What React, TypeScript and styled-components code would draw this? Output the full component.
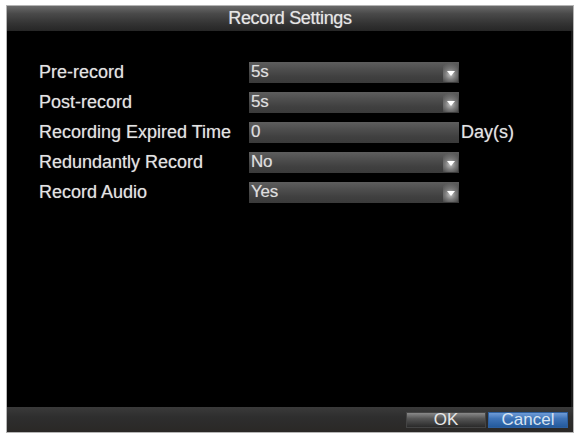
import React from "react";
import styled, { createGlobalStyle } from "styled-components";

const Global = createGlobalStyle`
  html, body { margin: 0; padding: 0; background: #ffffff; }
  body { font-family: "Liberation Sans", Arial, sans-serif; }
`;

const Page = styled.div`
  width: 578px;
  height: 437px;
  padding: 5px 0 0 6px;
  box-sizing: border-box;
`;

const Window = styled.div`
  width: 568px;
  height: 428px;
  box-sizing: border-box;
  border: 1px solid #b5b5b5;
  background: #000;
  display: flex;
  flex-direction: column;
  box-shadow: inset -2px 0 0 #1a1a1a;
`;

const TitleBar = styled.div`
  height: 25px;
  flex: none;
  display: flex;
  align-items: center;
  justify-content: center;
  background: linear-gradient(#6a6a6a 0%, #4a4a4a 30%, #333 70%, #262626 100%);
  color: #e6e6e6;
  font-size: 18px;
  letter-spacing: -0.3px;
  text-shadow: 0 0 1px rgba(255, 255, 255, 0.5);
`;

const Content = styled.div`
  flex: 1;
  padding: 26px 0 0 32px;
  display: flex;
  flex-direction: column;
`;

const Row = styled.div`
  height: 30px;
  display: flex;
  align-items: center;
`;

const Label = styled.div`
  width: 210px;
  color: #e4e4e4;
  font-size: 18px;
  white-space: nowrap;
  text-shadow: 0 0 1px rgba(255, 255, 255, 0.45);
`;

const Field = styled.div`
  position: relative;
  width: 210px;
  height: 21px;
  box-sizing: border-box;
  padding-left: 2px;
  display: flex;
  align-items: center;
  background: linear-gradient(#5e5e5e 0%, #4e4e4e 35%, #404040 70%, #3a3a3a 100%);
  color: #dedede;
  font-size: 17px;
  letter-spacing: -0.2px;
  text-shadow: 0 0 1px rgba(255, 255, 255, 0.4);
`;

const Arrow = styled.div`
  position: absolute;
  right: 1px;
  top: 1px;
  bottom: 1px;
  width: 15px;
  display: flex;
  align-items: center;
  justify-content: center;
  background: radial-gradient(circle at 50% 60%, #c0c0c0 0%, #7a7a7a 40%, rgba(80, 80, 80, 0) 85%);

  &::after {
    content: "";
    width: 0;
    height: 0;
    border-left: 4px solid transparent;
    border-right: 4px solid transparent;
    border-top: 5px solid #ffffff;
    margin-top: 2px;
  }
`;

const Unit = styled.div`
  margin-left: 2px;
  color: #e4e4e4;
  font-size: 18px;
  text-shadow: 0 0 1px rgba(255, 255, 255, 0.45);
`;

const Footer = styled.div`
  height: 25px;
  flex: none;
  display: flex;
  align-items: center;
  justify-content: flex-end;
  gap: 2px;
  padding-right: 5px;
  background: linear-gradient(#3a3a3a 0%, #2e2e2e 40%, #2a2826 100%);
`;

const Button = styled.div<{ $primary?: boolean }>`
  width: 80px;
  height: 16px;
  display: flex;
  align-items: center;
  justify-content: center;
  font-size: 17px;
  color: ${(p) => (p.$primary ? "#d8e4f2" : "#e8e8e8")};
  background: ${(p) =>
    p.$primary
      ? "linear-gradient(#6f9bd6 0%, #3f74b8 40%, #245a9c 100%)"
      : "linear-gradient(#8a8a8a 0%, #555 40%, #2a2a2a 100%)"};
  border: 1px solid ${(p) => (p.$primary ? "#2d5f9e" : "#444")};
  box-sizing: border-box;
  line-height: 1;
`;

type Item = { label: string; value: string; kind: "select" | "text"; unit?: string };

const items: Item[] = [
  { label: "Pre-record", value: "5s", kind: "select" },
  { label: "Post-record", value: "5s", kind: "select" },
  { label: "Recording Expired Time", value: "0", kind: "text", unit: "Day(s)" },
  { label: "Redundantly Record", value: "No", kind: "select" },
  { label: "Record Audio", value: "Yes", kind: "select" },
];

export default function App() {
  return (
    <Page>
      <Global />
      <Window>
        <TitleBar>Record Settings</TitleBar>
        <Content>
          {items.map((it) => (
            <Row key={it.label}>
              <Label>{it.label}</Label>
              <Field>
                {it.value}
                {it.kind === "select" && <Arrow />}
              </Field>
              {it.unit && <Unit>{it.unit}</Unit>}
            </Row>
          ))}
        </Content>
        <Footer>
          <Button>OK</Button>
          <Button $primary>Cancel</Button>
        </Footer>
      </Window>
    </Page>
  );
}
